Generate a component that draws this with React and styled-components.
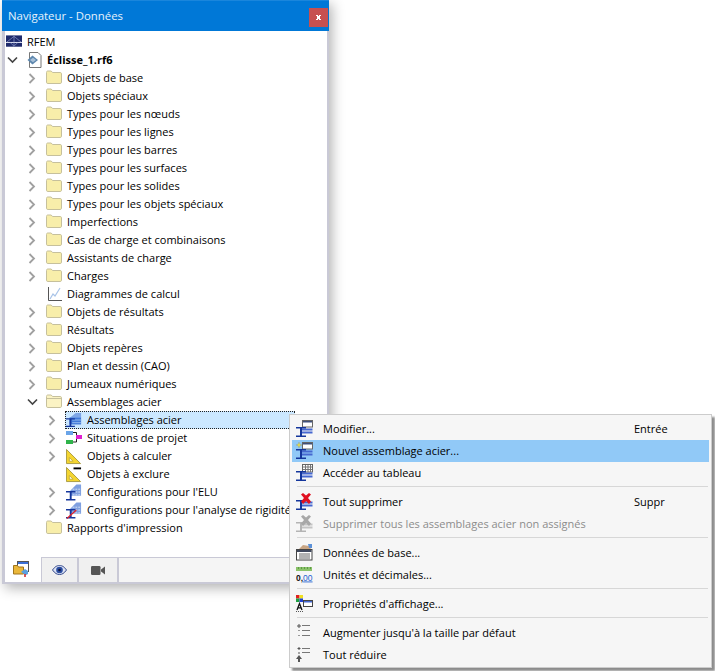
import React from "react";
import styled, { createGlobalStyle } from "styled-components";

const FONT = `"Open Sans", "Noto Sans", sans-serif`;

const Global = createGlobalStyle`
  html, body {
    margin: 0;
    padding: 0;
    background: #fff;
    font-family: ${FONT};
  }
`;

const Page = styled.div`
  position: relative;
  width: 715px;
  height: 671px;
  overflow: hidden;
`;

const Win = styled.div`
  width: 327px;
  height: 584px;
  margin-left: 2px;
  display: flex;
  flex-direction: column;
  background: #fff;
  box-shadow: 3px 4px 12px rgba(0, 0, 0, 0.3);
`;

const TitleBar = styled.div`
  height: 31px;
  flex: none;
  display: flex;
  align-items: center;
  justify-content: space-between;
  padding: 0 1px 0 6px;
  background: #0078d7;
  border-top: 1px solid #1a86dc;
  box-sizing: border-box;
`;

const Title = styled.span`
  color: #e6f2fb;
  font-size: 11.4px;
  padding-bottom: 1px;
`;

const CloseBtn = styled.div`
  width: 19px;
  height: 19px;
  margin-top: 3px;
  display: flex;
  align-items: center;
  justify-content: center;
  background: #c75050;
`;

const Body = styled.div`
  flex: 1;
  display: flex;
  flex-direction: column;
  min-height: 0;
  border-left: 3px solid #c9c9d6;
  border-right: 2px solid #c9c9d6;
  border-bottom: 2px solid #c9c9d6;
`;

const Tree = styled.div`
  flex: 1;
  padding-top: 2px;
`;

const Row = styled.div`
  height: 18px;
  display: flex;
  align-items: center;
  padding-left: ${(p) => (p.$root ? 1 : p.$level * 20)}px;
  white-space: nowrap;
`;

const Slot = styled.div`
  width: 14px;
  height: 18px;
  margin-right: 6px;
  flex: none;
  display: flex;
  align-items: center;
  justify-content: center;
`;

const Cell = styled.div`
  display: flex;
  align-items: center;
  height: 18px;
  box-sizing: border-box;
  padding-left: 1px;
  ${(p) =>
    p.$selected &&
    `
    width: 230px;
    background: #cce8ff;
    outline: 1px dotted #222;
    outline-offset: -1px;
  `}
`;

const IconBox = styled.span`
  width: 16px;
  height: 16px;
  flex: none;
  display: flex;
  align-items: center;
  justify-content: center;
  margin-right: 5px;
`;

const Label = styled.span`
  font-size: 11px;
  color: #000;
  font-weight: ${(p) => (p.$bold ? 700 : 400)};
  padding-bottom: 1px;
`;

const TabBar = styled.div`
  height: 25px;
  flex: none;
  display: flex;
  align-items: stretch;
  background: #f5f5f5;
  border-top: 1px solid #c9c9d6;
  box-sizing: border-box;
`;

const Tab = styled.div`
  width: ${(p) => p.$w}px;
  display: flex;
  align-items: center;
  justify-content: center;
  box-sizing: border-box;
  background: ${(p) => (p.$active ? "#fff" : "#f0f0f0")};
  border-right: 2px solid #c9c9d6;
  ${(p) => p.$active && "margin-top: -1px; border-right: 1px solid #c9c9d6; padding-right: 5px;"}
`;

const Menu = styled.div`
  position: absolute;
  left: 289px;
  top: 414px;
  width: 423px;
  height: 254px;
  box-sizing: border-box;
  padding: 3px 2px;
  background: #f6f6f6;
  border: 1px solid #cccccc;
  box-shadow: 3px 3px 2px rgba(0, 0, 0, 0.45);
`;

const Item = styled.div`
  height: 22px;
  display: flex;
  align-items: center;
  padding-left: 4px;
  background: ${(p) => (p.$hot ? "#91c9f7" : "transparent")};
  color: ${(p) => (p.$off ? "#8c8c8c" : "#000")};
  font-size: 11px;
  white-space: nowrap;
`;

const ItemIcon = styled.span`
  width: 18px;
  height: 18px;
  flex: none;
  margin-right: 9px;
  display: flex;
`;

const ItemText = styled.span`
  width: 311px;
  flex: none;
  padding-bottom: 1px;
`;

const Shortcut = styled.span`
  padding-bottom: 1px;
`;

const Sep = styled.div`
  height: 1px;
  margin: 2px 1px 4px 5px;
  background: #d7d7d7;
`;

/* --- drawings --- */

const Chevron = ({ open }) =>
  open ? (
    <svg width="11" height="8" viewBox="0 0 11 8">
      <path d="M1 1.5l4.5 4.5L10 1.5" fill="none" stroke="#444" strokeWidth="1.6" />
    </svg>
  ) : (
    <svg width="8" height="11" viewBox="0 0 8 11">
      <path d="M1.5 1L6 5.5 1.5 10" fill="none" stroke="#a0a0a0" strokeWidth="1.8" />
    </svg>
  );

const Folder = ({ open }) => (
  <svg width="16" height="16" viewBox="0 0 16 16">
    <path
      d="M.5 2.5C.5 1.500 1 1 1.800 1h3.400l1.300 1.500h7.700c.7 0 1.300.5 1.300 1.300v8.400c0 .8-.6 1.300-1.300 1.300H1.800c-.8 0-1.300-.5-1.300-1.300z"
      fill={open ? "#fbf3c4" : "#f8eeaa"}
      stroke="#c6c09c"
    />
    {open && <path d="M1 4.500h14" stroke="#c6c09c" />}
  </svg>
);

const RfemLogo = () => (
  <svg width="17" height="14" viewBox="0 0 17 14">
    <rect width="17" height="12" fill="#1e2a6c" />
    <path d="M0 7.500h17" stroke="#e8ecf8" strokeWidth="1" />
    <path d="M1 7L8.500 1 16 7M4 7l4.500 4.500L13 7M8.500 1v10" fill="none" stroke="#a8b4e0" strokeWidth=".6" />
  </svg>
);

const FileIcon = () => (
  <svg width="16" height="16" viewBox="0 0 16 16">
    <path d="M3.500.5h8.500l3 3v12H3.500z" fill="#fff" stroke="#777" />
    <path d="M1.500 8l5-4.500L12 8l-5.500 4.500z" fill="#5c86ad" />
    <path d="M4 8l3-2.200L10 8l-3 2.200z" fill="#a8c0d8" />
  </svg>
);

const Chart = () => (
  <svg width="16" height="16" viewBox="0 0 16 16">
    <path d="M2.500 1v13.500H16" fill="none" stroke="#555" />
    <path d="M4 13l3-5 2 2 5-8" fill="none" stroke="#a9c4e8" strokeWidth="1.200" />
  </svg>
);

const Beam = ({ color = "#14369c" }) => (
  <path d="M0 7h10v1.500H6v7h4V17H0v-1.500h4v-7H0z" fill={color} />
);

const SteelTree = () => (
  <svg width="18" height="18" viewBox="0 0 18 18">
    <path d="M5 6l6-5h6v5z" fill="#7ea6e6" />
    <rect x="4" y="6" width="13" height="8" fill="#3f78d8" />
    <path d="M7 9h10M7 12h10" stroke="#9cc0f0" />
    <Beam />
  </svg>
);

const Situations = () => (
  <svg width="16" height="16" viewBox="0 0 16 16">
    <rect x="0" y="1" width="7" height="4" fill="#6aa5e8" />
    <rect x="0" y="10" width="7" height="4" fill="#2fb34a" />
    <rect x="10" y="5" width="6" height="4" fill="#e01fd0" />
    <path d="M7 2.500h3.500v2.500M7 12h3.500V9" fill="none" stroke="#222" />
  </svg>
);

const SetSquare = ({ minus }) => (
  <svg width="17" height="17" viewBox="0 0 17 17">
    <path d="M.5 1v15h15z" fill="#f4d531" stroke="#a89a40" />
    <path d="M3.500 9.500v4h4z" fill="#fff" stroke="#c4ae30" />
    {minus && <path d="M8 2h8" stroke="#000" strokeWidth="2" />}
  </svg>
);

const Config = ({ rigid }) => (
  <svg width="17" height="17" viewBox="0 0 17 17">
    <path d="M5 6l6-6h5v12H5z" fill="#7fa0e0" />
    <path d="M7 5h9M7 8h9M7 11h9" stroke="#d6e2f6" strokeDasharray="2 1" />
    <Beam />
    {rigid && <path d="M1 17L11 8" stroke="#e0202a" strokeWidth="1.300" />}
  </svg>
);

const Winbox = () => (
  <>
    <rect x="6.500" y=".5" width="10" height="6.500" fill="#fff" stroke="#666" />
    <rect x="7" y="1" width="9" height="1.500" fill="#40507a" />
  </>
);

const Plates = ({ c = "#4668d0" }) => (
  <>
    <rect x="4" y="8.500" width="12.500" height="2" fill={c} />
    <rect x="4" y="11.500" width="12.500" height="2" fill={c} />
  </>
);

const Modify = () => (
  <svg width="18" height="18" viewBox="0 0 18 18">
    <Winbox />
    <Plates />
    <Beam />
  </svg>
);

const NewSteel = () => (
  <svg width="18" height="18" viewBox="0 0 18 18">
    <Winbox />
    <Plates />
    <Beam />
    <path d="M3 0l.8 2.200L6 3 3.800 3.800 3 6l-.8-2.200L0 3l2.200-.8z" fill="#e8e040" stroke="#888" strokeWidth=".3" />
  </svg>
);

const TableSteel = () => (
  <svg width="18" height="18" viewBox="0 0 18 18">
    <rect x="6.500" y=".5" width="10" height="7.500" fill="#fff" stroke="#666" />
    <path d="M7 3h9M7 5.500h9M9.500 1v7M12 1v7M14.500 1v7" stroke="#777" />
    <Plates />
    <Beam />
  </svg>
);

const DeleteAll = ({ off }) => (
  <svg width="18" height="18" viewBox="0 0 18 18">
    <Plates c={off ? "#c4c4c4" : "#4668d0"} />
    <Beam color={off ? "#b4b4b4" : "#14369c"} />
    <path
      d="M5 1.500L7 0l3 2.500L13 0l2 1.500-3 3.500 3 3.500L13 11 10 8l-3 3-2-2.500L8 5z"
      fill={off ? "#a8a8a8" : "#e01020"}
    />
  </svg>
);

const BaseData = () => (
  <svg width="18" height="18" viewBox="0 0 18 18">
    <rect x=".5" y="5.500" width="15.500" height="10.500" fill="#fff" stroke="#444" />
    <rect x="1" y="6" width="14.500" height="2" fill="#40485c" />
    <path d="M3 10h11M3 12h11M3 14h11" stroke="#666" />
    <path d="M3 5l4-4 6 1 2 3z" fill="#c8a584" />
    <path d="M12 0h4v4h-3z" fill="#5a90d8" />
  </svg>
);

const Units = () => (
  <svg width="18" height="18" viewBox="0 0 18 18">
    <rect x="0" y="1" width="16" height="4" fill="#8bc36a" />
    <path d="M2.500 1v2M5.500 1v2M8.500 1v2M11.500 1v2M14.500 1v2" stroke="#5e9a46" />
    <text x="0" y="14.500" fontSize="8.500" fontWeight="700" fontFamily="Liberation Sans, sans-serif" fill="#111">
      0,
      <tspan fill="#1f5fd0" fontWeight="400" textDecoration="underline">
        00
      </tspan>
    </text>
  </svg>
);

const DisplayProps = () => (
  <svg width="18" height="18" viewBox="0 0 18 18">
    <rect x="0" y="0" width="3.500" height="3.500" fill="#e02020" />
    <rect x="3.500" y="0" width="3.500" height="3.500" fill="#f0e020" />
    <rect x="0" y="3.500" width="3.500" height="3.500" fill="#20a040" />
    <rect x="3.500" y="3.500" width="3.500" height="3.500" fill="#2040d0" />
    <rect x="7.500" y="5.500" width="9" height="6" fill="#fff" stroke="#444" />
    <rect x="8" y="6" width="8" height="1.500" fill="#4668d0" />
    <path d="M1 15l2.500-6.500L6 15M2 12.800h3" fill="none" stroke="#111" strokeWidth="1.300" />
    <path d="M0 16.500h7" stroke="#555" strokeDasharray="1 1" />
  </svg>
);

const ExpandIcon = () => (
  <svg width="18" height="18" viewBox="0 0 18 18">
    <path d="M6 1.500h8M6 6.500h8M6 11.500h8" stroke="#777" />
    <path d="M3 0v4M1 2h4" stroke="#555" />
    <path d="M2 6.500h2M2 11.500h2" stroke="#999" />
  </svg>
);

const CollapseIcon = () => (
  <svg width="18" height="18" viewBox="0 0 18 18">
    <path d="M6 2.500h8M6 6.500h8" stroke="#777" />
    <path d="M3 1v3M1.500 2.500h3M3 6v2" stroke="#555" />
    <path d="M3 9l3 4H4v3H2v-3H0z" fill="#555" />
  </svg>
);

const Eye = () => (
  <svg width="15" height="10" viewBox="0 0 15 10">
    <path d="M.5 5C3 1.500 5 .5 7.500.5S12 1.500 14.500 5C12 8.500 10 9.500 7.500 9.500S3 8.500.5 5z" fill="#dbe2f4" stroke="#354a8c" />
    <circle cx="7.500" cy="5" r="3.300" fill="#2b4da0" />
    <circle cx="7.500" cy="5" r="1.300" fill="#101840" />
  </svg>
);

const Camera = () => (
  <svg width="14" height="9" viewBox="0 0 14 9">
    <rect x="0" y="0" width="9.500" height="9" rx="1.200" fill="#555" />
    <path d="M10 3.500L14 .5v8l-4-3z" fill="#555" />
  </svg>
);

const DataTab = () => (
  <svg width="16" height="17" viewBox="0 0 16 17">
    <rect x="4.500" y=".5" width="11" height="10" fill="#fff" stroke="#555" />
    <rect x="5" y="1" width="10" height="2" fill="#3c70d8" />
    <path d="M.5 4.500h4l1 1.500h5v7h-10z" fill="#eab73a" stroke="#a0751c" />
    <path d="M8 11l4-3 3 2v3l-2 1-2-1z" fill="#5aa0e0" />
    <path d="M12 13v3" stroke="#d02020" strokeWidth="1.500" />
  </svg>
);

const CloseGlyph = () => (
  <svg width="5" height="5" viewBox="0 0 5 5" shapeRendering="crispEdges">
    <path d="M0 0h2v1h1V0h2v1H4v3h1v1H3V4H2v1H0V4h1V1H0z" fill="#fff" />
  </svg>
);

/* --- content --- */

const folderRows = [
  "Objets de base",
  "Objets spéciaux",
  "Types pour les nœuds",
  "Types pour les lignes",
  "Types pour les barres",
  "Types pour les surfaces",
  "Types pour les solides",
  "Types pour les objets spéciaux",
  "Imperfections",
  "Cas de charge et combinaisons",
  "Assistants de charge",
  "Charges",
];

const rows = [
  ...folderRows.map((t) => ({ t, level: 1, icon: <Folder />, arrow: true })),
  { t: "Diagrammes de calcul", level: 1, icon: <Chart /> },
  ...["Objets de résultats", "Résultats", "Objets repères", "Plan et dessin (CAO)", "Jumeaux numériques"].map((t) => ({
    t,
    level: 1,
    icon: <Folder />,
    arrow: true,
  })),
  { t: "Assemblages acier", level: 1, icon: <Folder open />, arrow: true, open: true },
  { t: "Assemblages acier", level: 2, icon: <SteelTree />, arrow: true, selected: true },
  { t: "Situations de projet", level: 2, icon: <Situations />, arrow: true },
  { t: "Objets à calculer", level: 2, icon: <SetSquare />, arrow: true },
  { t: "Objets à exclure", level: 2, icon: <SetSquare minus /> },
  { t: "Configurations pour l'ELU", level: 2, icon: <Config />, arrow: true },
  { t: "Configurations pour l'analyse de rigidité", level: 2, icon: <Config rigid />, arrow: true },
  { t: "Rapports d'impression", level: 1, icon: <Folder /> },
];

const menu = [
  { t: "Modifier...", key: "Entrée", icon: <Modify /> },
  { t: "Nouvel assemblage acier...", icon: <NewSteel />, hot: true },
  { t: "Accéder au tableau", icon: <TableSteel /> },
  null,
  { t: "Tout supprimer", key: "Suppr", icon: <DeleteAll /> },
  { t: "Supprimer tous les assemblages acier non assignés", icon: <DeleteAll off />, off: true },
  null,
  { t: "Données de base...", icon: <BaseData /> },
  { t: "Unités et décimales...", icon: <Units /> },
  null,
  { t: "Propriétés d'affichage...", icon: <DisplayProps /> },
  null,
  { t: "Augmenter jusqu'à la taille par défaut", icon: <ExpandIcon /> },
  { t: "Tout réduire", icon: <CollapseIcon /> },
];

export default function App() {
  return (
    <Page>
      <Global />
      <Win>
        <TitleBar>
          <Title>Navigateur - Données</Title>
          <CloseBtn>
            <CloseGlyph />
          </CloseBtn>
        </TitleBar>
        <Body>
          <Tree>
            <Row $root>
              <IconBox>
                <RfemLogo />
              </IconBox>
              <Label>RFEM</Label>
            </Row>
            <Row $level={0}>
              <Slot>
                <Chevron open />
              </Slot>
              <Cell>
                <IconBox>
                  <FileIcon />
                </IconBox>
                <Label $bold>Éclisse_1.rf6</Label>
              </Cell>
            </Row>
            {rows.map((r, i) => (
              <Row key={i} $level={r.level}>
                <Slot>{r.arrow && <Chevron open={r.open} />}</Slot>
                <Cell $selected={r.selected}>
                  <IconBox>{r.icon}</IconBox>
                  <Label>{r.t}</Label>
                </Cell>
              </Row>
            ))}
          </Tree>
          <TabBar>
            <Tab $active $w={37}>
              <DataTab />
            </Tab>
            <Tab $w={37}>
              <Eye />
            </Tab>
            <Tab $w={40}>
              <Camera />
            </Tab>
          </TabBar>
        </Body>
      </Win>
      <Menu>
        {menu.map((m, i) =>
          m ? (
            <Item key={i} $hot={m.hot} $off={m.off}>
              <ItemIcon>{m.icon}</ItemIcon>
              <ItemText>{m.t}</ItemText>
              {m.key && <Shortcut>{m.key}</Shortcut>}
            </Item>
          ) : (
            <Sep key={i} />
          )
        )}
      </Menu>
    </Page>
  );
}
